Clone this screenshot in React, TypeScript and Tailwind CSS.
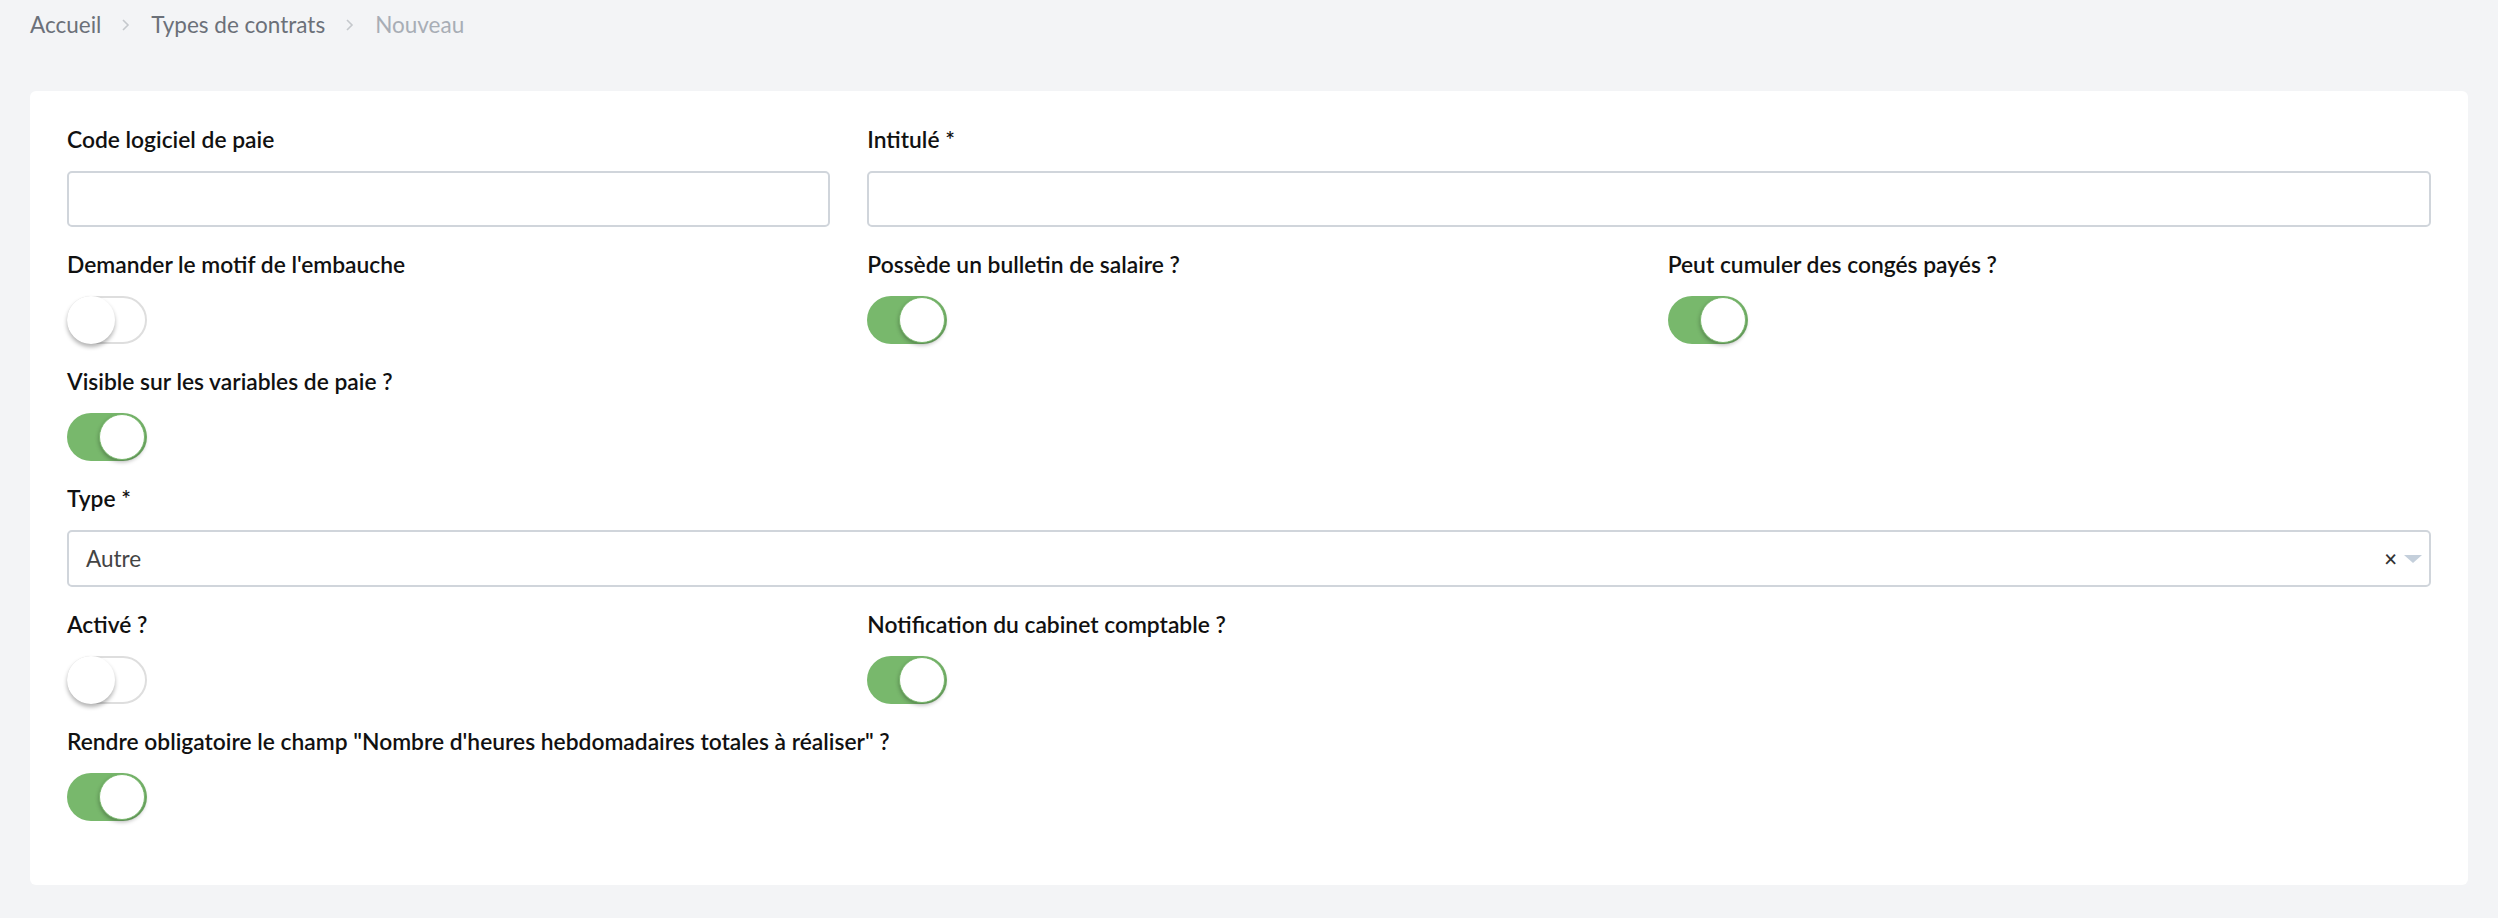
import React from "react";

const FONT = "font-['Lato','Noto_Sans',sans-serif]";

function Toggle({ on }: { on: boolean }) {
  if (on) {
    return (
      <div className="relative h-[48px] w-[80px] rounded-full bg-[#78b86c]">
        <div className="absolute right-[2px] top-[1px] h-[46px] w-[46px] rounded-full border border-[#78b86c] bg-white shadow-[0_2px_4px_rgba(0,0,0,0.3)]" />
      </div>
    );
  }
  return (
    <div className="relative h-[48px] w-[80px] rounded-full border-2 border-[#dedede] bg-white">
      <div className="absolute left-[-2px] top-[-2px] h-[48px] w-[48px] rounded-full bg-white shadow-[0_3px_4px_rgba(0,0,0,0.3)]" />
    </div>
  );
}

function Label({ children }: { children: React.ReactNode }) {
  return (
    <div className="mb-[18px] h-[27px] whitespace-nowrap text-[22.8px] font-semibold leading-[27px] text-[#111]">
      {children}
    </div>
  );
}

function ToggleField({ label, on, className = "" }: { label: string; on: boolean; className?: string }) {
  return (
    <div className={className}>
      <Label>{label}</Label>
      <Toggle on={on} />
    </div>
  );
}

function Chevron() {
  return (
    <svg width="10" height="14" viewBox="0 0 10 14" className="mx-[20px]">
      <path d="M2 2l5 5-5 5" fill="none" stroke="#c5c8cc" strokeWidth="1.6" />
    </svg>
  );
}

export default function App() {
  return (
    <div className={`min-h-[918px] bg-[#f3f4f6] px-[30px] pt-[10px] ${FONT}`}>
      <div className="flex h-[30px] items-center text-[22.5px] leading-[30px]">
        <span className="text-[#6b7079]">Accueil</span>
        <Chevron />
        <span className="text-[#6b7079]">Types de contrats</span>
        <Chevron />
        <span className="text-[#a8adb5]">Nouveau</span>
      </div>
      <div className="mt-[51px] rounded-[6px] bg-white px-[37px] pb-[64px] pt-[35px]">
        <div className="grid grid-cols-3 gap-x-[37px] gap-y-[24px]">
          <div>
            <Label>Code logiciel de paie</Label>
            <input className="block h-[56px] w-full rounded-[5px] border-2 border-[#d0d5db] px-[18px] text-[20px] outline-none" />
          </div>
          <div className="col-span-2">
            <Label>Intitulé *</Label>
            <input className="block h-[56px] w-full rounded-[5px] border-2 border-[#d0d5db] px-[18px] text-[20px] outline-none" />
          </div>

          <ToggleField label="Demander le motif de l'embauche" on={false} />
          <ToggleField label="Possède un bulletin de salaire ?" on={true} />
          <ToggleField label="Peut cumuler des congés payés ?" on={true} />

          <ToggleField label="Visible sur les variables de paie ?" on={true} className="col-span-3" />

          <div className="col-span-3">
            <Label>Type *</Label>
            <div className="flex h-[57px] w-full items-center rounded-[5px] border-2 border-[#d0d5db] pl-[17px] pr-[6px]">
              <span className="flex-1 text-[22.5px] text-[#444]">Autre</span>
              <span className="text-[22px] font-semibold leading-none text-[#333]">×</span>
              <svg width="20" height="10" viewBox="0 0 20 10" className="ml-[6px]">
                <path d="M1 1h18l-9 8z" fill="#c4cfdb" />
              </svg>
            </div>
          </div>

          <ToggleField label="Activé ?" on={false} />
          <ToggleField label="Notification du cabinet comptable ?" on={true} className="col-span-2" />

          <ToggleField
            label={'Rendre obligatoire le champ "Nombre d\'heures hebdomadaires totales à réaliser" ?'}
            on={true}
            className="col-span-3"
          />
        </div>
      </div>
    </div>
  );
}
